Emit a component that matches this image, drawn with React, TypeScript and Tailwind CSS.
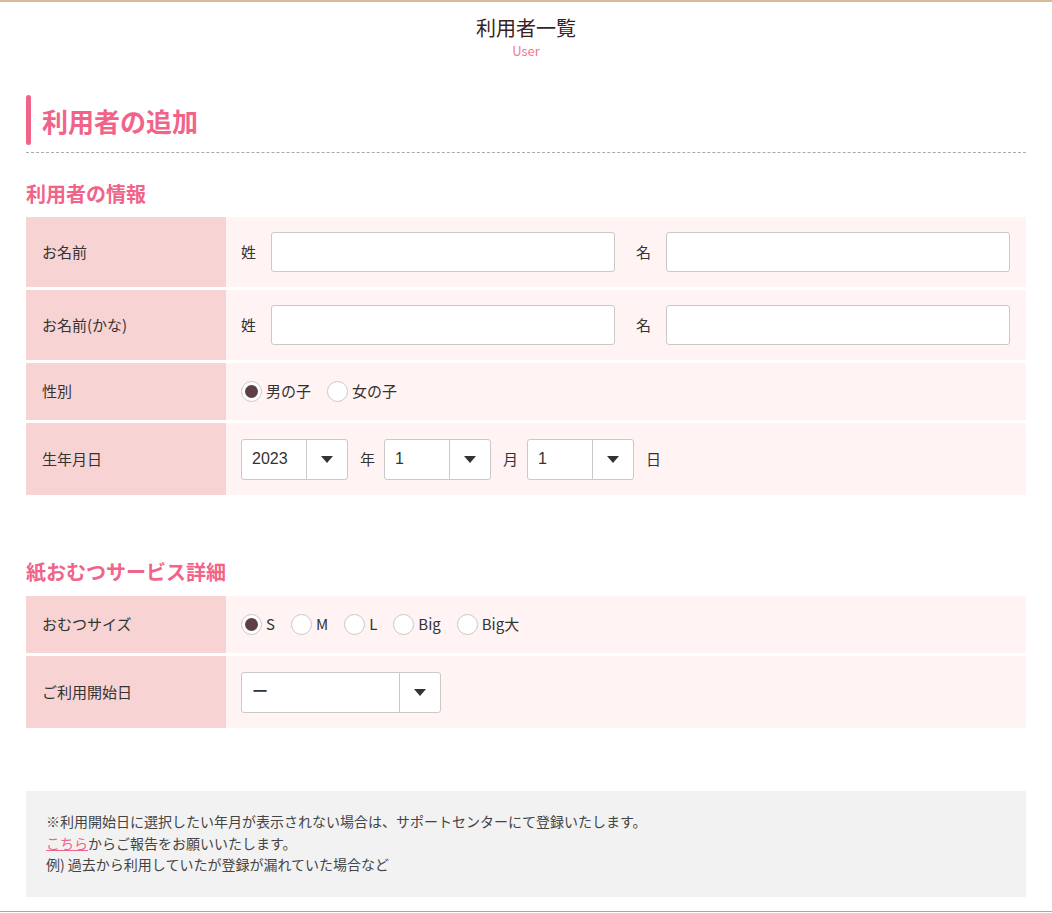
import { useState } from 'react';

const FONT = "font-['Noto_Sans_CJK_JP','Noto_Sans',sans-serif]";

// ── 共通パーツ ───────────────────────────────
function Row({ label, h, children }: { label: string; h: string; children: React.ReactNode }) {
  return (
    <div className={`flex ${h}`}>
      <div className="w-[200px] shrink-0 bg-[#f8d3d3] pl-[16px] flex items-center text-[15px] text-[#333]">
        {label}
      </div>
      <div className="flex-1 bg-[#fff3f3] pl-[15px] pr-[16px] flex items-center text-[15px] text-[#333]">
        {children}
      </div>
    </div>
  );
}

function Radio({ label, checked, onClick, gap }: { label: string; checked: boolean; onClick: () => void; gap: string }) {
  return (
    <button type="button" onClick={onClick} className={`flex items-center ${gap}`}>
      <span className="w-[21px] h-[21px] rounded-full border border-[#c9c9c9] bg-white flex items-center justify-center">
        {checked && <span className="w-[13px] h-[13px] rounded-full bg-[#5e3f48]" />}
      </span>
      <span className="ml-[4px] text-[15px] text-[#333]">{label}</span>
    </button>
  );
}

function Select({ value, w }: { value: string; w: string }) {
  return (
    <div className={`flex h-[41px] ${w} shrink-0 rounded-[3px] border border-[#c9c9c9] bg-white`}>
      <div className="flex-1 pl-[10px] flex items-center text-[16px] text-[#333] font-['Liberation_Sans',sans-serif]">
        {value}
      </div>
      <div className="w-[41px] border-l border-[#c9c9c9] flex items-center justify-center">
        <svg width="12" height="7" viewBox="0 0 12 7">
          <path d="M0 0h12L6 7z" fill="#333" />
        </svg>
      </div>
    </div>
  );
}

function NameInputs() {
  return (
    <div className="flex items-center w-full">
      <span className="w-[15px]">姓</span>
      <input className="ml-[15px] flex-1 min-w-0 h-[40px] rounded-[3px] border border-[#c9c9c9] bg-white px-2" />
      <span className="ml-[21px] w-[15px]">名</span>
      <input className="ml-[15px] flex-1 min-w-0 h-[40px] rounded-[3px] border border-[#c9c9c9] bg-white px-2" />
    </div>
  );
}

export default function App() {
  const [gender, setGender] = useState('男の子');
  const [size, setSize] = useState('S');

  return (
    <div className={`min-h-[913px] bg-white border-t-2 border-[#d8bc97] ${FONT}`}>
      <header className="pt-[12px] text-center">
        <h1 className="text-[20px] leading-[28px] text-[#3a1f1f]">利用者一覧</h1>
        <p className="text-[13px] leading-[18px] text-[#f2788f]">User</p>
      </header>

      <main className="px-[26px]">
        <div className="mt-[35px] flex items-center h-[50px]">
          <span className="w-[5px] h-[50px] rounded-full bg-[#f2638a]" />
          <h2 className="ml-[11px] text-[26px] font-bold text-[#f2638a]">利用者の追加</h2>
        </div>
        <div className="mt-[7px] border-b border-dashed border-[#aaa]" />

        <h3 className="mt-[28px] text-[20px] leading-[26px] font-bold text-[#f2638a]">利用者の情報</h3>
        <div className="mt-[10px] flex flex-col gap-[3px]">
          <Row label="お名前" h="h-[70px]">
            <NameInputs />
          </Row>
          <Row label="お名前(かな)" h="h-[70px]">
            <NameInputs />
          </Row>
          <Row label="性別" h="h-[57px]">
            {['男の子', '女の子'].map(g => (
              <Radio key={g} label={g} checked={gender === g} onClick={() => setGender(g)} gap="mr-[16px]" />
            ))}
          </Row>
          <Row label="生年月日" h="h-[72px]">
            <Select value="2023" w="w-[107px]" />
            <span className="ml-[12px] mr-[9px] w-[15px]">年</span>
            <Select value="1" w="w-[107px]" />
            <span className="ml-[12px] mr-[9px] w-[15px]">月</span>
            <Select value="1" w="w-[107px]" />
            <span className="ml-[12px] w-[15px]">日</span>
          </Row>
        </div>

        <h3 className="mt-[64px] text-[20px] leading-[26px] font-bold text-[#f2638a]">紙おむつサービス詳細</h3>
        <div className="mt-[11px] flex flex-col gap-[3px]">
          <Row label="おむつサイズ" h="h-[57px]">
            {['S', 'M', 'L', 'Big', 'Big大'].map(s => (
              <Radio key={s} label={s} checked={size === s} onClick={() => setSize(s)} gap="mr-[16px]" />
            ))}
          </Row>
          <Row label="ご利用開始日" h="h-[72px]">
            <Select value="ー" w="w-[200px]" />
          </Row>
        </div>

        <div className="mt-[63px] h-[106px] bg-[#f2f2f2] px-[20px] pt-[20px] text-[14px] leading-[21.5px] text-[#444]">
          <p>※利用開始日に選択したい年月が表示されない場合は、サポートセンターにて登録いたします。</p>
          <p>
            <a href="#" className="text-[#f2638a] underline">こちら</a>からご報告をお願いいたします。
          </p>
          <p>例) 過去から利用していたが登録が漏れていた場合など</p>
        </div>
      </main>
      <div className="mt-[14px] border-t border-[#aaa]" />
    </div>
  );
}
